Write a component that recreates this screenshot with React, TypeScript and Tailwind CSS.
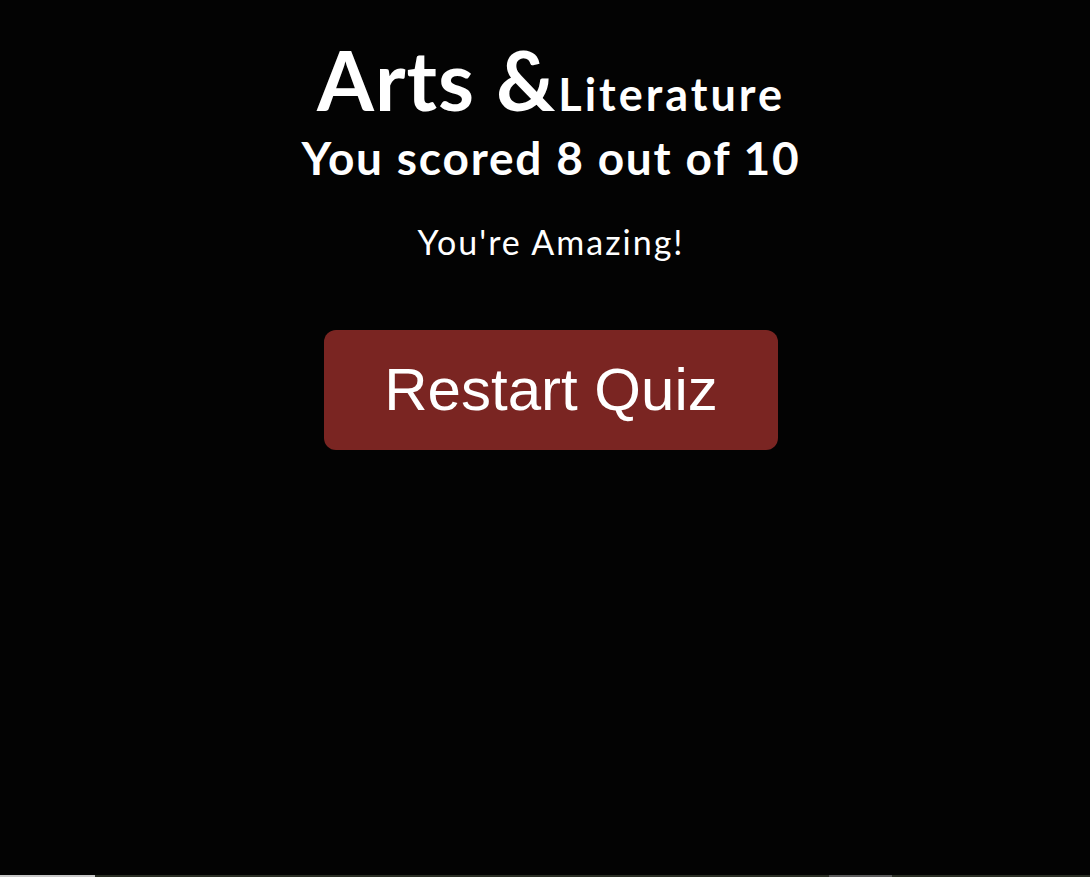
export default function App() {
  return (
    <div className="min-h-[877px] w-full bg-[#030303] flex flex-col">
      <div className="flex-1 flex flex-col items-center pl-[12px] pt-[38px] text-white font-['Lato','Open_Sans',sans-serif]">
        <h1 className="flex items-baseline leading-none">
          <span className="text-[82px] font-bold tracking-[1px]">Arts &amp;</span>
          <span className="text-[45px] font-bold ml-[2px] tracking-[3px]">Literature</span>
        </h1>
        <h2 className="mt-[15px] text-[46px] font-bold leading-none tracking-[1.8px]">You scored 8 out of 10</h2>
        <p className="mt-[44px] text-[34px] leading-none tracking-[2px]">You're Amazing!</p>
        <button className="mt-[71px] w-[454px] h-[120px] rounded-[12px] bg-[#7a2522] text-[60px] text-white font-['Liberation_Sans',Arial,sans-serif]">
          Restart Quiz
        </button>
      </div>
      <div className="h-[2px] flex">
        <div className="w-[95px] bg-[#c8c8c8]" />
        <div className="w-[734px] bg-[#2a2e24]" />
        <div className="w-[63px] bg-[#5a5a5a]" />
        <div className="flex-1 bg-[#2a2e24]" />
      </div>
    </div>
  );
}
